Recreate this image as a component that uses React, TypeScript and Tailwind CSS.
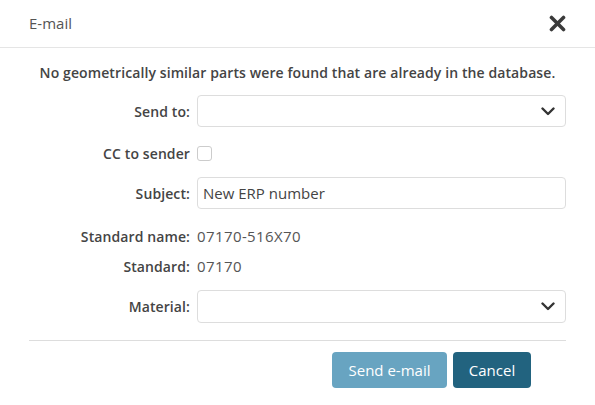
import React from 'react';

const Chevron = () => (
  <svg width="14" height="9" viewBox="0 0 14 9" className="text-[#333]">
    <polyline points="1.5,1.5 7,7 12.5,1.5" fill="none" stroke="currentColor" strokeWidth="2.4" strokeLinecap="round" strokeLinejoin="round" />
  </svg>
);

const CloseIcon = () => (
  <svg width="17" height="17" viewBox="0 0 17 17" className="text-[#3a3a3a]">
    <line x1="2.5" y1="2.5" x2="14.5" y2="14.5" stroke="currentColor" strokeWidth="3.6" strokeLinecap="round" />
    <line x1="14.5" y1="2.5" x2="2.5" y2="14.5" stroke="currentColor" strokeWidth="3.6" strokeLinecap="round" />
  </svg>
);

const Label = ({ children }: { children: React.ReactNode }) => (
  <div className="w-[168px] shrink-0 pr-[7px] text-right text-[14px] font-semibold tracking-[0.1px] text-[#444]">{children}</div>
);

const SelectBox = () => (
  <div className="flex h-full flex-1 items-center justify-end rounded-[4px] border border-[#ddd] bg-white pr-[10px]">
    <Chevron />
  </div>
);

export default function App() {
  return (
    <div className="h-[405px] w-[595px] bg-white text-[15px] text-[#555]" style={{ fontFamily: '"Open Sans", "Noto Sans", sans-serif' }}>
      {/* Header */}
      <div className="flex h-[48px] items-center justify-between border-b border-[#e5e5e5] pl-[29px] pr-[29px]">
        <span className="text-[15px] text-[#555]">E-mail</span>
        <CloseIcon />
      </div>

      <div className="px-[29px]">
        <p className="mt-[15px] h-[20px] text-center text-[14px] font-semibold leading-[20px] tracking-[0.1px] text-[#444]">
          No geometrically similar parts were found that are already in the database.
        </p>

        <div className="mt-[12px] flex h-[32px] items-center">
          <Label>Send to:</Label>
          <SelectBox />
        </div>

        <div className="mt-[16px] flex h-[20px] items-center">
          <Label>CC to sender</Label>
          <div className="h-[15px] w-[15px] rounded-[3px] border border-[#ccc] bg-white" />
        </div>

        <div className="mt-[14px] flex h-[32px] items-center">
          <Label>Subject:</Label>
          <div className="flex h-full flex-1 items-center rounded-[4px] border border-[#ddd] bg-white pl-[5px] text-[#444]">
            New ERP number
          </div>
        </div>

        <div className="mt-[17px] flex h-[20px] items-center">
          <Label>Standard name:</Label>
          <span className="tracking-[0.4px]">07170-516X70</span>
        </div>

        <div className="mt-[10px] flex h-[20px] items-center">
          <Label>Standard:</Label>
          <span className="tracking-[0.4px]">07170</span>
        </div>

        <div className="mt-[14px] flex h-[33px] items-center">
          <Label>Material:</Label>
          <SelectBox />
        </div>

        <div className="mt-[17px] border-t border-[#ddd]" />

        <div className="mt-[11px] flex justify-end gap-[6px] pr-[35px]">
          <button className="h-[36px] w-[115px] rounded-[4px] bg-[#68a4c1] text-[15px] text-white">Send e-mail</button>
          <button className="h-[36px] w-[78px] rounded-[4px] bg-[#22637f] text-[15px] text-white">Cancel</button>
        </div>
      </div>
    </div>
  );
}
